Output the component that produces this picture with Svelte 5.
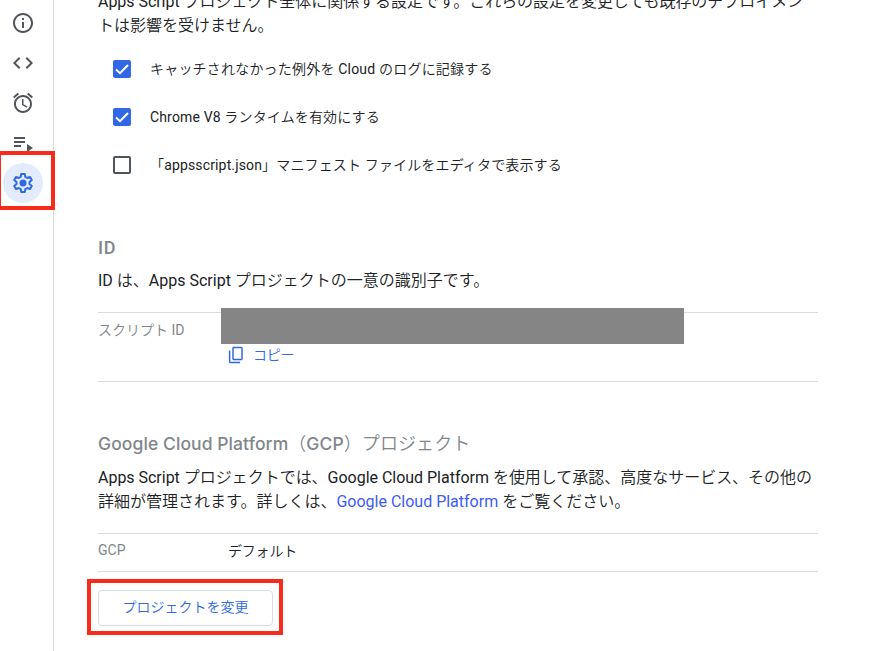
<script>
  const options = [
    { label: 'キャッチされなかった例外を Cloud のログに記録する', checked: true, spacing: 0.2 },
    { label: 'Chrome V8 ランタイムを有効にする', checked: true, spacing: 0.15 },
    { label: '「appsscript.json」マニフェスト ファイルをエディタで表示する', checked: false, spacing: 0.15 },
  ];
</script>

<div class="page">
  <nav>
    <span class="item"><svg viewBox="0 0 24 24"><path d="M11 7h2v2h-2zm0 4h2v6h-2zm1-9C6.480 2 2 6.480 2 12s4.480 10 10 10 10-4.480 10-10S17.520 2 12 2zm0 18c-4.410 0-8-3.590-8-8s3.590-8 8-8 8 3.590 8 8-3.590 8-8 8z" /></svg></span>
    <span class="item"><svg viewBox="0 0 24 24"><path d="M9.400 16.600L4.800 12l4.600-4.600L8 6l-6 6 6 6 1.400-1.400zm5.200 0l4.600-4.600-4.600-4.600L16 6l6 6-6 6-1.400-1.400z" /></svg></span>
    <span class="item"><svg viewBox="0 0 24 24"><path d="M12.500 8H11v6l4.750 2.850.750-1.230-4-2.370zm4.837-6.190l4.607 3.845-1.280 1.535-4.610-3.843zm-10.674 0l1.282 1.536L3.337 7.190l-1.280-1.536zM12 4c-4.970 0-9 4.030-9 9s4.030 9 9 9 9-4.030 9-9-4.030-9-9-9zm0 16c-3.860 0-7-3.140-7-7s3.140-7 7-7 7 3.140 7 7-3.140 7-7 7z" /></svg></span>
    <span class="item"><svg viewBox="0 0 24 24"><path d="M3 6h11v2H3zm0 4h11v2H3zm0 4h7v2H3zm13 -1v8l6-4z" /></svg></span>
    <span class="item active"><svg viewBox="0 0 24 24"><path class="cog" d="M10.200 3h3.600l.5 2.900 1.900 1.100 2.800-1 1.800 3.100-2.300 1.900v2l2.300 1.900-1.800 3.100-2.800-1-1.900 1.100-.5 2.900h-3.600l-.5-2.900L7.800 17 5 18l-1.800-3.100L5.500 13v-2L3.200 9.100 5 6l2.800 1 1.900-1.100z" /><circle cx="12" cy="12" r="3.500" /></svg></span>
    <div class="mark gear-mark"></div>
  </nav>

  <main>
    <p class="intro"><span class="l1">Apps Script プロジェクト全体に関係する設定です。これらの設定を変更しても既存のデプロイメン</span><br /><span>トは影響を受けません。</span></p>

    <div class="options">
      {#each options as option}
        <div class="option">
          <span class="box" class:checked={option.checked}>
            {#if option.checked}<svg viewBox="0 0 18 18"><path d="M3 9.400L7 13.200L15 5" /></svg>{/if}
          </span>
          <span class="text" style="letter-spacing: {option.spacing}px">{option.label}</span>
        </div>
      {/each}
    </div>

    <h2 class="id-title">ID</h2>
    <p class="id-text">ID は、Apps Script プロジェクトの一意の識別子です。</p>
    <div class="row id-row">
      <span class="key">スクリプト ID</span>
      <div class="value">
        <div class="redacted"></div>
        <div class="copy">
          <svg viewBox="0 0 24 24"><path d="M19 1H9C7.900 1 7 1.900 7 3v14c0 1.100.9 2 2 2h10c1.100 0 2-.9 2-2V3c0-1.100-.9-2-2-2zm0 16H9V3h10v14zM2.500 6v15c0 1.100.9 2 2 2h13v-2h-13V6h-2z" /></svg>
          <span>コピー</span>
        </div>
      </div>
    </div>

    <h2 class="gcp-title"><span class="latin">Google Cloud Platform</span><span class="jp">（<span class="abbr">GCP</span>）プロジェクト</span></h2>
    <p class="gcp-text"><span class="l3">Apps Script プロジェクトでは、Google Cloud Platform を使用して承認、高度なサービス、その他の</span><br /><span>詳細が管理されます。詳しくは、<span class="link">Google Cloud Platform</span> をご覧ください。</span></p>
    <div class="row gcp-row">
      <span class="key">GCP</span>
      <span class="default">デフォルト</span>
    </div>
    <div class="action">
      <button>プロジェクトを変更</button>
      <div class="mark button-mark"></div>
    </div>
  </main>
</div>

<style>
  :global(body) { margin: 0; background: #fff; overflow: hidden; }
  .page {
    display: flex;
    width: 883px;
    height: 651px;
    overflow: hidden;
    font-family: Roboto, "Noto Sans CJK JP DemiLight", "Noto Sans CJK JP Light", "Noto Sans CJK JP", sans-serif;
    color: #202124;
    white-space: nowrap;
  }
  svg { display: block; }
  nav {
    position: relative;
    box-sizing: border-box;
    flex: none;
    width: 54px;
    height: 651px;
    padding: 3px 0 0 3px;
    border-right: 1px solid #dadce0;
  }
  .item {
    display: flex;
    align-items: center;
    justify-content: center;
    width: 40px;
    height: 40px;
    border-radius: 50%;
  }
  .item svg { width: 24px; height: 24px; fill: #50555b; }
  .active { background: #e3ecfd; }
  .active svg { fill: #3069e3; }
  .active .cog { fill: none; stroke: #3069e3; stroke-width: 2; stroke-linejoin: round; }
  .mark { position: absolute; box-sizing: border-box; border: 4px solid #f72a1b; }
  .gear-mark { left: -3px; top: 151px; width: 58px; height: 59px; }
  main { flex: none; width: 720px; margin-left: 44px; }
  p { margin: 0; font-size: 16px; line-height: 24px; font-weight: 400; }
  .intro { margin-top: -10px; height: 55px; }
  .l1, .l3 { letter-spacing: -.02px; }
  .l1 { letter-spacing: -.04px; }
  .option { display: flex; align-items: center; height: 48px; padding-left: 15px; }
  .box {
    box-sizing: border-box;
    width: 18px;
    height: 18px;
    border: 2px solid #50555b;
    border-radius: 2px;
  }
  .box.checked { border: 0; background: #3069e3; }
  .box svg { width: 18px; height: 18px; fill: none; stroke: #fff; stroke-width: 2; }
  .text { margin-left: 19px; font-size: 14px; line-height: 20px; }
  h2 { margin: 0; font-size: 18px; line-height: 24px; font-weight: 500; color: #80868b; }
  .id-title { margin-top: 47px; letter-spacing: .6px; }
  .id-text { margin-top: 9px; }
  .row {
    display: flex;
    box-sizing: border-box;
    border-top: 1px solid #dadce0;
    border-bottom: 1px solid #dadce0;
  }
  .key { flex: none; width: 130px; font-size: 14px; line-height: 20px; color: #80868b; }
  .id-row { height: 70px; margin-top: 19px; }
  .id-row .key { width: 123px; padding-top: 7px; }
  .value { margin-top: -5px; }
  .redacted { width: 463px; height: 36px; background: #858585; }
  .copy {
    display: flex;
    align-items: center;
    height: 20px;
    padding-left: 6px;
    font-size: 14px;
    color: #3069e3;
  }
  .copy svg { width: 18px; height: 18px; margin-top: 2px; fill: #3069e3; }
  .copy span { margin-left: 8px; letter-spacing: -.2px; }
  .gcp-title { display: flex; margin-top: 50px; }
  .gcp-title .latin, .abbr { font-family: Inter, Roboto, sans-serif; font-size: 17.500px; font-weight: 500; letter-spacing: .08px; }
  .gcp-title .jp { font-weight: 400; letter-spacing: .08px; }
  .gcp-text { margin-top: 10px; }
  .link { color: #3c5cf5; }
  .gcp-row { height: 39px; margin-top: 19px; }
  .gcp-row .key { padding-top: 6px; }
  .default { padding-top: 7px; font-size: 14px; line-height: 20px; letter-spacing: -.2px; }
  .action { position: relative; margin-top: 18px; height: 36px; }
  button {
    box-sizing: border-box;
    width: 175px;
    height: 36px;
    padding: 0 0 2px;
    border: 1px solid #dadce0;
    border-radius: 4px;
    background: #fff;
    font: inherit;
    font-size: 14px;
    line-height: 20px;
    color: #3069e3;
  }
  .button-mark { left: -11px; top: -11px; width: 196px; height: 56px; }
</style>
